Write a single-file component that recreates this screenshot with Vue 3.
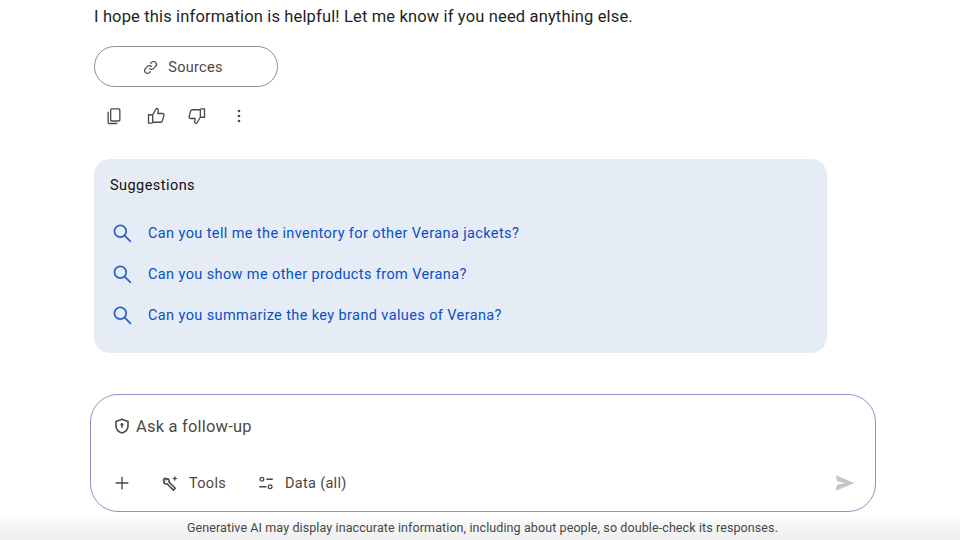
<template>
  <div class="page">
    <main class="answer">
      <p class="closing">I hope this information is helpful! Let me know if you need anything else.</p>

      <button class="sources">
        <svg class="link-icon" viewBox="0 0 24 24" fill="none" stroke="currentColor" stroke-width="1.7" stroke-linecap="round">
          <path d="M10.5 13.5a4 4 0 0 0 5.7 0l3-3a4 4 0 0 0-5.7-5.7l-1.2 1.2" />
          <path d="M13.5 10.5a4 4 0 0 0-5.7 0l-3 3a4 4 0 0 0 5.7 5.7l1.2-1.2" />
        </svg>
        <span>Sources</span>
      </button>

      <div class="actions">
        <svg viewBox="0 0 24 24" fill="none" stroke="currentColor" stroke-width="1.6">
          <rect x="8" y="3.5" width="11" height="14.5" rx="1.2" />
          <path d="M5 7v12.5a1.5 1.5 0 0 0 1.5 1.5H16" />
        </svg>
        <svg viewBox="0 0 24 24" fill="none" stroke="currentColor" stroke-width="1.6" stroke-linejoin="round">
          <path d="M8 10.5h-5v10h5" />
          <path d="M8 10.5l4.5-7.5c1.6 0 2.5 1 2.3 2.6l-.6 3.4h5.6c1.2 0 2 1.1 1.7 2.2l-2 7c-.2.8-1 1.3-1.8 1.3H8z" />
        </svg>
        <svg viewBox="0 0 24 24" fill="none" stroke="currentColor" stroke-width="1.6" stroke-linejoin="round">
          <path d="M16 13.5h5v-10h-5" />
          <path d="M16 13.5L11.5 21c-1.6 0-2.5-1-2.3-2.6l.6-3.4H4.2c-1.2 0-2-1.1-1.7-2.2l2-7c.2-.8 1-1.3 1.8-1.3H16z" />
        </svg>
        <svg viewBox="0 0 24 24" fill="currentColor">
          <circle cx="12" cy="6" r="1.6" />
          <circle cx="12" cy="12" r="1.6" />
          <circle cx="12" cy="18" r="1.6" />
        </svg>
      </div>

      <section class="suggestions">
        <h2>Suggestions</h2>
        <ul>
          <li v-for="item in suggestions" :key="item">
            <svg viewBox="0 0 24 24" fill="none" stroke="currentColor" stroke-width="2" stroke-linecap="round">
              <circle cx="9.5" cy="9.5" r="6.7" />
              <path d="M14.5 14.5L21 21" />
            </svg>
            <span>{{ item }}</span>
          </li>
        </ul>
      </section>
    </main>

    <div class="composer">
      <div class="prompt">
        <svg viewBox="0 0 24 24" fill="none" stroke="currentColor" stroke-width="2.2" stroke-linejoin="round">
          <path d="M12 3l8 3v5.5c0 4.8-3.2 8.2-8 9.8-4.800-1.600-8-5-8-9.800V6z" />
          <circle cx="12" cy="10" r="2" fill="currentColor" stroke="none" />
          <path d="M12 11v3.5" stroke-width="1.8" />
        </svg>
        <span>Ask a follow-up</span>
      </div>
      <div class="tools">
        <svg class="plus" viewBox="0 0 24 24" fill="none" stroke="currentColor" stroke-width="1.8">
          <path d="M12 3.5v17M3.5 12h17" />
        </svg>
        <div class="tool tool-first">
          <svg viewBox="0 0 24 24" fill="none" stroke="currentColor" stroke-width="2" stroke-linejoin="round">
            <path d="M3 8l2.500-2.500 2 2L9 6c1.500 1 2.300 2.800 1.500 4.500l8.500 8.500-2.500 2.500-8.500-8.500C6.300 13.800 4.500 13 3.500 11.500L5 10z" />
            <path d="M18.500 2l1 3 3 1-3 1-1 3-1-3-3-1 3-1z" fill="currentColor" stroke="none" />
          </svg>
          <span>Tools</span>
        </div>
        <div class="tool">
          <svg viewBox="0 0 24 24" fill="none" stroke="currentColor" stroke-width="1.7">
            <circle cx="6.5" cy="7" r="2.5" />
            <path d="M12.5 7H21M3 17h9.5" />
            <circle cx="17.5" cy="17" r="2.5" />
          </svg>
          <span>Data (all)</span>
        </div>
        <svg class="send" viewBox="0 0 24 24" fill="currentColor">
          <path d="M2 3.500L22 12 2 20.500l1.300-6.700L12.500 12 3.300 10.200z" />
        </svg>
      </div>
    </div>

    <footer class="disclaimer">
      Generative AI may display inaccurate information, including about people, so double-check its responses.
    </footer>
  </div>
</template>

<script setup>
const suggestions = [
  'Can you tell me the inventory for other Verana jackets?',
  'Can you show me other products from Verana?',
  'Can you summarize the key brand values of Verana?',
];
</script>

<style>
html,
body {
  margin: 0;
  background: #fff;
}
</style>

<style scoped>
.page {
  width: 960px;
  height: 540px;
  overflow: hidden;
  display: flex;
  flex-direction: column;
  font-family: Roboto, "Liberation Sans", sans-serif;
  color: #444746;
}

.answer {
  padding: 6px 0 0 94px;
}

.closing {
  margin: 0;
  height: 22px;
  font-size: 16.5px;
  line-height: 22px;
  color: #1f1f1f;
  letter-spacing: 0.15px;
}

.sources {
  display: flex;
  align-items: center;
  justify-content: center;
  gap: 9px;
  width: 184px;
  height: 41px;
  margin-top: 18px;
  padding: 1px 7px 0 0;
  border: 1px solid #8a8d8f;
  border-radius: 21px;
  background: #fff;
  color: #50453e;
  font: inherit;
  font-size: 14.5px;
  letter-spacing: 0.3px;
}

.link-icon {
  width: 17px;
  height: 17px;
}

.actions {
  display: flex;
  align-items: center;
  gap: 21.5px;
  height: 20px;
  margin: 19px 0 0 10px;
  color: #4a4a48;
}

.actions svg {
  width: 20px;
  height: 20px;
}

.suggestions {
  width: 733px;
  height: 194px;
  margin-top: 33px;
  padding: 18px 16px 0;
  box-sizing: border-box;
  border-radius: 16px;
  background: #e6ecf5;
}

.suggestions h2 {
  margin: 0;
  font-size: 14.5px;
  line-height: 17px;
  font-weight: 400;
  color: #111;
  letter-spacing: 0.45px;
}

.suggestions ul {
  margin: 19px 0 0;
  padding: 0;
  list-style: none;
}

.suggestions li {
  display: flex;
  align-items: center;
  gap: 15px;
  height: 41px;
  color: #0a50c4;
  font-size: 14.5px;
  letter-spacing: 0.39px;
}

.suggestions li svg {
  width: 21px;
  height: 21px;
  margin-left: 2px;
  color: #2a62c4;
}

.composer {
  width: 786px;
  height: 118px;
  margin: 41px 0 0 90px;
  padding: 20px 22px 0;
  box-sizing: border-box;
  border: 1px solid #a488c8;
  border-radius: 28px;
  background: #fff;
}

.prompt {
  display: flex;
  align-items: center;
  gap: 5px;
  height: 22px;
  font-size: 16.5px;
  letter-spacing: 0.2px;
  color: #4f4a46;
}

.prompt svg {
  width: 18px;
  height: 18px;
}

.tools {
  display: flex;
  align-items: center;
  height: 24px;
  margin-top: 34px;
  font-size: 14.5px;
  letter-spacing: 0.3px;
  color: #50453e;
}

.tools svg {
  width: 18px;
  height: 18px;
}

.tool {
  display: flex;
  align-items: center;
  gap: 10px;
  margin-left: 31px;
}

.tool-first {
  margin-left: 30px;
}

.tools .send {
  width: 22px;
  height: 22px;
  margin-left: auto;
  margin-right: -3px;
  color: #c3c7ca;
}

.disclaimer {
  height: 23px;
  margin-top: 5px;
  padding-left: 5px;
  flex-shrink: 0;
  text-align: center;
  font-size: 12.5px;
  line-height: 21px;
  letter-spacing: 0.1px;
  color: #444746;
  background: linear-gradient(#fbfbfb, #eeeeee);
}
</style>
